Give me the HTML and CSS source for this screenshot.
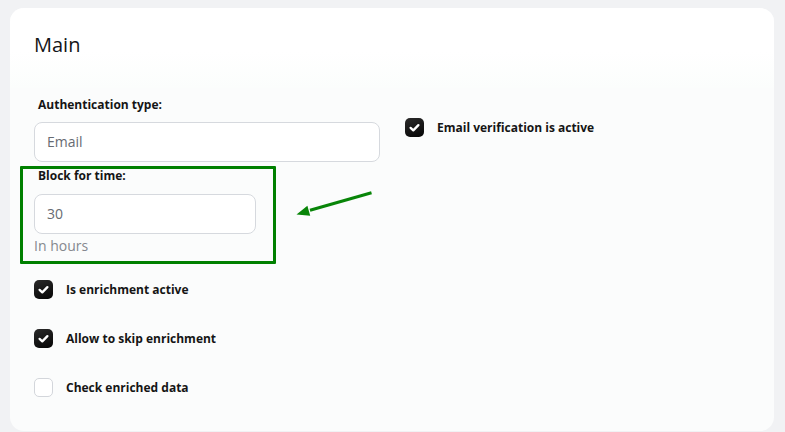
FILE: index.html
```html
<!DOCTYPE html>
<html lang="en">
<head>
<meta charset="utf-8">
<title>Main settings</title>
<link rel="stylesheet" href="styles.css">
</head>
<body>
<section class="card">
  <header class="card-head"><h2 class="title">Main</h2></header>
  <div class="card-body">
    <div class="col-left">
      <div class="field">
        <div class="label">Authentication type:</div>
        <div class="input">Email</div>
      </div>
      <div class="field highlight">
        <div class="label">Block for time:</div>
        <div class="input">30</div>
        <div class="hint">In hours</div>
      </div>
      <div class="checks">
        <div class="check"><span class="box on"><svg viewBox="0 0 19 19" width="19" height="19"><polyline points="5.6,9.9 8.3,12.4 13.4,7.1" /></svg></span><span class="check-text">Is enrichment active</span></div>
        <div class="check"><span class="box on"><svg viewBox="0 0 19 19" width="19" height="19"><polyline points="5.6,9.9 8.3,12.4 13.4,7.1" /></svg></span><span class="check-text">Allow to skip enrichment</span></div>
        <div class="check"><span class="box"></span><span class="check-text">Check enriched data</span></div>
      </div>
    </div>
    <div class="col-right">
      <div class="check"><span class="box on"><svg viewBox="0 0 19 19" width="19" height="19"><polyline points="5.6,9.9 8.3,12.4 13.4,7.1" /></svg></span><span class="check-text">Email verification is active</span></div>
    </div>
  </div>
  <svg class="arrow" width="764" height="424" viewBox="0 0 764 424">
    <line x1="361.5" y1="184.8" x2="300" y2="202.3" />
    <polygon points="286.5,206.4 300.2,207.8 297.4,197.8" />
  </svg>
</section>
</body>
</html>
```

FILE: styles.css
```css
* { box-sizing: border-box; }
html, body { margin: 0; padding: 0; }
body {
  background: #f1f2f4;
  font-family: "Open Sans", "Noto Sans", sans-serif;
  color: #1b1c1e;
  padding: 8px 11px 0 10px;
  height: 432px;
  overflow: hidden;
}
.card {
  position: relative;
  background: #fbfcfc;
  border-radius: 14px;
  height: 423px;
  overflow: hidden;
}
.card-head {
  height: 80px;
  padding: 24px 24px 0;
  background: linear-gradient(#ffffff 55%, #fbfdfc 100%);
}
.title {
  margin: 0;
  font-size: 20px;
  line-height: 26px;
  font-weight: 400;
  color: #141517;
}
.card-body {
  display: flex;
  padding: 9px 24px 0;
}
.col-left {
  width: 346px;
  display: flex;
  flex-direction: column;
}
.col-right {
  padding: 21px 0 0 25px;
}
.label {
  font-size: 12px;
  line-height: 16px;
  font-weight: 700;
  padding-left: 4px;
  margin-bottom: 9px;
  color: #151515;
}
.input {
  height: 40px;
  border: 1px solid #d6d9de;
  border-radius: 8px;
  background: #fff;
  padding: 0 12px;
  font-size: 14px;
  line-height: 38px;
  color: #676b72;
}
.highlight {
  margin: 4px 0 0 -14px;
  width: 256px;
  border: 3px solid #008000;
  border-radius: 1px;
  padding: 0 17px 5px 11px;
}
.highlight .label { line-height: 14px; margin-bottom: 11px; }
.hint {
  margin-top: 2px;
  font-size: 14px;
  line-height: 20px;
  color: #85888e;
}
.checks {
  margin-top: 16px;
  display: flex;
  flex-direction: column;
  gap: 30px;
}
.check {
  display: flex;
  align-items: center;
  gap: 13px;
  height: 19px;
}
.box {
  width: 19px;
  height: 19px;
  border-radius: 5px;
  border: 1px solid #d3d6db;
  background: #fff;
  flex: none;
  display: block;
}
.box.on {
  border: none;
  background: linear-gradient(160deg, #2a2a2a, #050505);
}
.box svg { display: block; }
.box polyline {
  fill: none;
  stroke: #fff;
  stroke-width: 2.3;
  stroke-linecap: round;
  stroke-linejoin: round;
}
.check-text {
  font-size: 12px;
  font-weight: 700;
  line-height: 16px;
  color: #151515;
}
.arrow {
  position: absolute;
  left: 0;
  top: 0;
  pointer-events: none;
}
.arrow line { stroke: #088508; stroke-width: 3; }
.arrow polygon { fill: #088508; }
```
